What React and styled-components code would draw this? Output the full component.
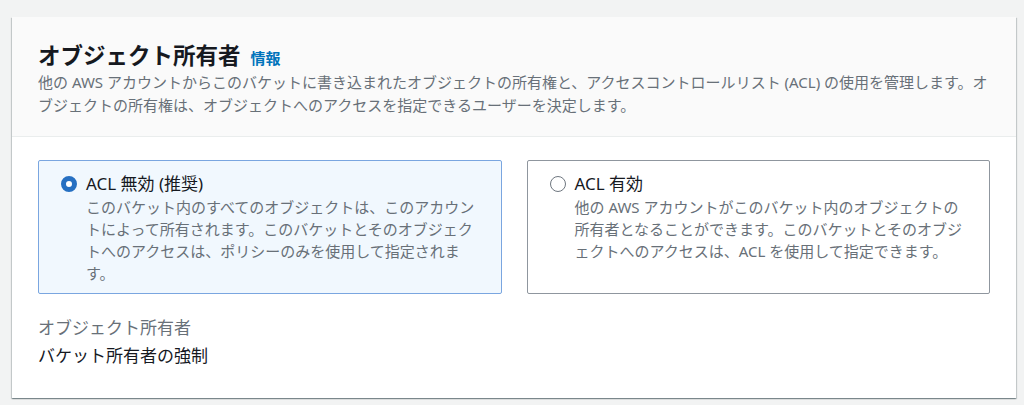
import React from 'react'
import styled, { createGlobalStyle } from 'styled-components'

const GlobalStyle = createGlobalStyle`
    body {
        margin:0;
        background:#f2f3f3;
        font-family:"Noto Sans", "Noto Sans CJK JP", sans-serif;
        color:#16191f;
    }
`

const options = [
    {
        id: 'disabled',
        label: 'ACL 無効 (推奨)',
        text: 'このバケット内のすべてのオブジェクトは、このアカウントによって所有されます。このバケットとそのオブジェクトへのアクセスは、ポリシーのみを使用して指定されます。',
        checked: true,
    },
    {
        id: 'enabled',
        label: 'ACL 有効',
        text: '他の AWS アカウントがこのバケット内のオブジェクトの所有者となることができます。このバケットとそのオブジェクトへのアクセスは、ACL を使用して指定できます。',
        checked: false,
    },
]

const App = () => (
    <>
        <GlobalStyle />
        <Page>
            <Card>
                <Header>
                    <TitleRow>
                        <Title>オブジェクト所有者</Title>
                        <InfoLink href="#">情報</InfoLink>
                    </TitleRow>
                    <Description>
                        他の AWS アカウントからこのバケットに書き込まれたオブジェクトの所有権と、アクセスコントロールリスト (ACL) の使用を管理します。オブジェクトの所有権は、オブジェクトへのアクセスを指定できるユーザーを決定します。
                    </Description>
                </Header>
                <Body>
                    <TileGrid>
                        {options.map(o => (
                            <Tile key={o.id} selected={o.checked}>
                                <Radio selected={o.checked} />
                                <TileText>
                                    <TileLabel>{o.label}</TileLabel>
                                    <TileDescription>{o.text}</TileDescription>
                                </TileText>
                            </Tile>
                        ))}
                    </TileGrid>
                    <Field>
                        <FieldLabel>オブジェクト所有者</FieldLabel>
                        <FieldValue>バケット所有者の強制</FieldValue>
                    </Field>
                </Body>
            </Card>
        </Page>
    </>
)

export default App

const Page = styled.div`
    padding:17px 8px 8px 12px;
`

const Card = styled.section`
    background:#fff;
    box-shadow:0 1px 1px 0 rgba(0,28,36,0.3), 1px 1px 1px 0 rgba(0,28,36,0.15), -1px 1px 1px 0 rgba(0,28,36,0.15);
`

const Header = styled.div`
    background:#fafafa;
    border-bottom:1px solid #eaeded;
    padding:24px 26px 19px;
`

const TitleRow = styled.div`
    display:flex;
    align-items:baseline;
    gap:10px;
`

const Title = styled.h2`
    margin:0;
    font-size:22.5px;
    line-height:30px;
    font-weight:700;
    color:#16191f;
`

const InfoLink = styled.a`
    font-size:15px;
    font-weight:700;
    color:#0073bb;
    text-decoration:none;
`

const Description = styled.p`
    margin:0;
    font-size:15px;
    line-height:23px;
    color:#687078;
`

const Body = styled.div`
    padding:23px 26px 28px;
`

const TileGrid = styled.div`
    display:grid;
    grid-template-columns:1fr 1fr;
    gap:25px;
`

const Tile = styled.label`
    display:flex;
    align-items:flex-start;
    gap:9px;
    padding:11px 22px 9px;
    border:1px solid ${p => (p.selected ? '#7aa6e0' : '#8f969e')};
    border-radius:2px;
    background:${p => (p.selected ? '#f1f8fe' : '#fff')};
`

const Radio = styled.span`
    flex:none;
    box-sizing:border-box;
    width:16px;
    height:16px;
    margin-top:4px;
    border-radius:50%;
    border:${p => (p.selected ? '5px solid #2670c2' : '1.5px solid #6f7780')};
    background:#fff;
`

const TileText = styled.div`
    flex:1;
    min-width:0;
`

const TileLabel = styled.div`
    font-size:17px;
    line-height:24px;
    color:#16191f;
`

const TileDescription = styled.div`
    font-size:15px;
    line-height:22px;
    color:#687078;
`

const Field = styled.div`
    margin-top:20px;
`

const FieldLabel = styled.div`
    font-size:17px;
    line-height:28px;
    color:#687078;
`

const FieldValue = styled.div`
    font-size:17px;
    line-height:28px;
    color:#16191f;
`
